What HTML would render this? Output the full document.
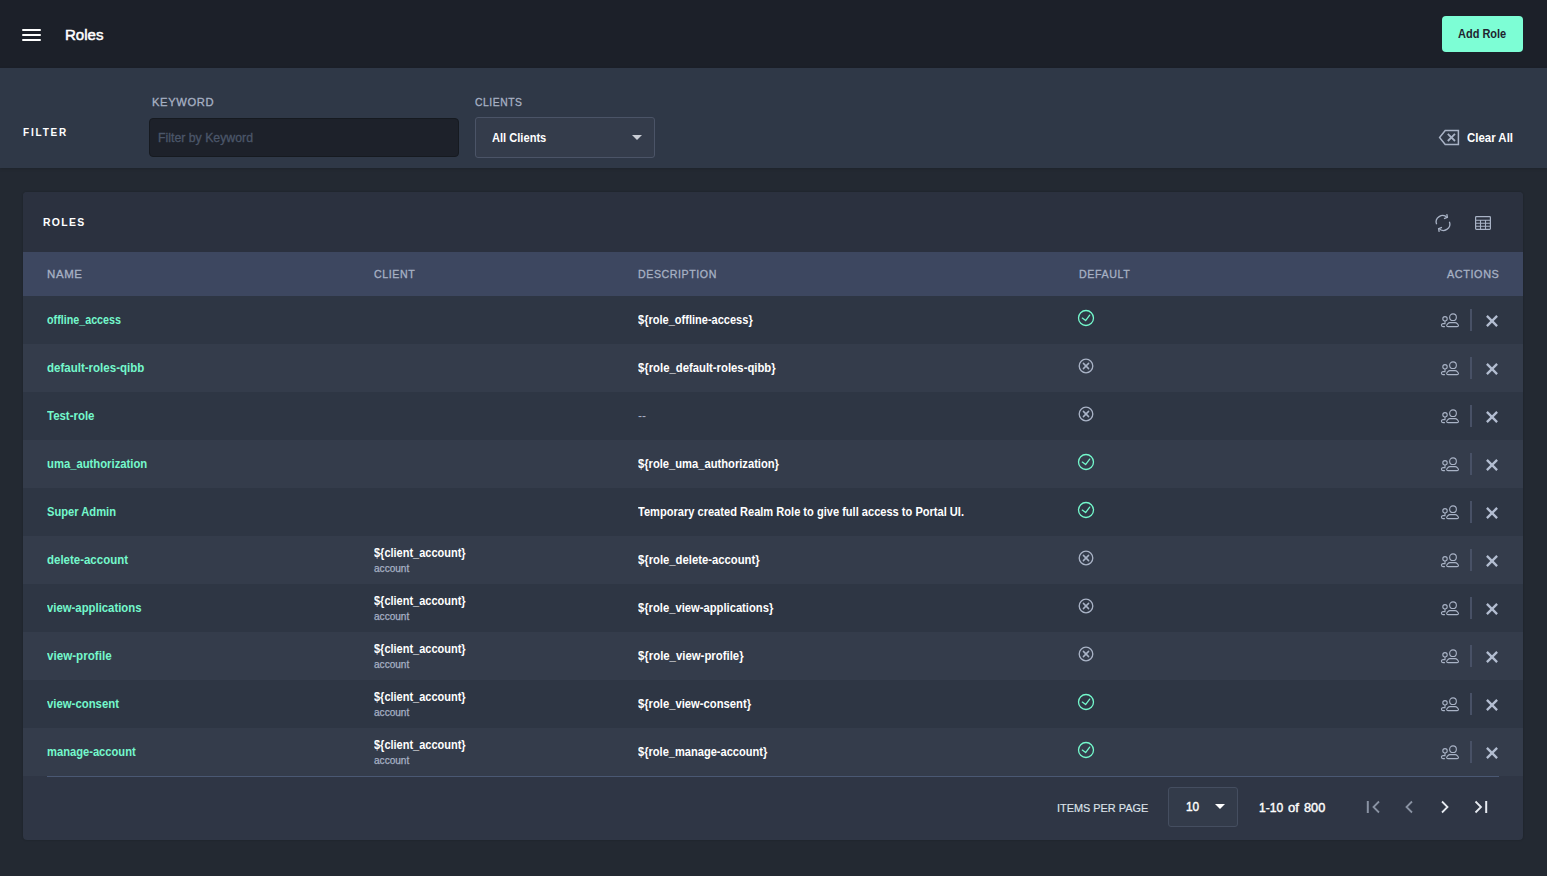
<!DOCTYPE html>
<html><head><meta charset="utf-8"><title>Roles</title>
<style>
html,body{margin:0;padding:0;}
body{width:1547px;height:876px;overflow:hidden;background:#232932;position:relative;font-family:"Liberation Sans",sans-serif;}
.t{position:absolute;white-space:nowrap;line-height:1;}
.b{position:absolute;}
svg{position:absolute;overflow:visible;}
</style></head><body>
<div class="b" style="left:0;top:0;width:1547px;height:68px;background:#1c2029"></div>
<div class="b" style="left:22px;top:29px;width:19px;height:2px;background:#fff;border-radius:1px"></div>
<div class="b" style="left:22px;top:34px;width:19px;height:2px;background:#fff;border-radius:1px"></div>
<div class="b" style="left:22px;top:39px;width:19px;height:2px;background:#fff;border-radius:1px"></div>
<div class="t" style="top:27.30px;font-size:15px;color:#ffffff;-webkit-text-stroke:0.5px #ffffff;left:64.60px;transform:scaleX(1.0039);transform-origin:0 0;">Roles</div>
<div class="b" style="left:1442px;top:16px;width:81px;height:36px;background:#7dfed5;border-radius:4px"></div>
<div class="t" style="top:27.84px;font-size:12px;color:#1f2430;font-weight:700;left:1458.40px;transform:scaleX(0.9155);transform-origin:0 0;">Add Role</div>
<div class="b" style="left:0;top:68px;width:1547px;height:100px;background:#2f3847;box-shadow:0 1px 3px rgba(0,0,0,0.15)"></div>
<div class="t" style="top:126.69px;font-size:11px;color:#ffffff;font-weight:700;letter-spacing:2px;left:23.40px;transform:scaleX(0.9078);transform-origin:0 0;">FILTER</div>
<div class="t" style="top:96.69px;font-size:11px;color:#a7b1c4;letter-spacing:0.6px;-webkit-text-stroke:0.3px #a7b1c4;left:151.60px;transform:scaleX(1.0174);transform-origin:0 0;">KEYWORD</div>
<div class="b" style="left:149px;top:118px;width:308px;height:37px;background:#1d212a;border:1px solid #161a20;border-radius:4px"></div>
<div class="t" style="top:131.84px;font-size:12px;color:#4b5669;-webkit-text-stroke:0.3px #4b5669;left:158.00px;transform:scaleX(1.0248);transform-origin:0 0;">Filter by Keyword</div>
<div class="t" style="top:97.19px;font-size:11px;color:#a7b1c4;letter-spacing:0.6px;-webkit-text-stroke:0.3px #a7b1c4;left:475.20px;transform:scaleX(0.9391);transform-origin:0 0;">CLIENTS</div>
<div class="b" style="left:475px;top:117px;width:178px;height:39px;background:#343c4b;border:1px solid #4b5467;border-radius:3px"></div>
<div class="t" style="top:131.84px;font-size:12px;color:#ffffff;font-weight:700;left:492.20px;transform:scaleX(0.9250);transform-origin:0 0;">All Clients</div>
<svg style="left:632px;top:135px" width="10" height="5"><path d="M0 0H10L5 5Z" fill="#c9cdd5"/></svg>
<svg style="left:1438px;top:129px" width="22" height="17" viewBox="0 0 22 17"><path d="M7.2 1.6H20.4V15.4H7.2L1.6 8.5Z" fill="none" stroke="#a9b3c6" stroke-width="1.5" stroke-linejoin="miter"/><path d="M9.8 4.8L17 12" stroke="#a9b3c6" stroke-width="1.8"/><path d="M17 4.8L9.8 12" stroke="#a9b3c6" stroke-width="1.8"/></svg>
<div class="t" style="top:131.84px;font-size:12px;color:#ffffff;font-weight:700;left:1466.80px;transform:scaleX(0.9534);transform-origin:0 0;">Clear All</div>
<div class="b" style="left:23px;top:192px;width:1500px;height:648px;background:#2f3645;border-radius:4px;overflow:hidden;box-shadow:0 0 2px rgba(0,0,0,0.25)"><div class="b" style="left:0;top:0;width:1500px;height:60px;background:#2b313f"></div></div>
<div class="t" style="top:216.69px;font-size:11px;color:#ffffff;font-weight:700;letter-spacing:1.4px;left:43.00px;transform:scaleX(0.9471);transform-origin:0 0;">ROLES</div>
<svg style="left:1433px;top:212px" width="20" height="22" viewBox="0 0 20 22"><path d="M3.6 12.3A6.4 6.4 0 0 1 14.2 5.6" fill="none" stroke="#a9b3c6" stroke-width="1.3"/><path d="M11.0 6.6L14.4 5.4L13.8 2.2" fill="none" stroke="#a9b3c6" stroke-width="1.3"/><path d="M16.4 9.7A6.4 6.4 0 0 1 5.8 16.4" fill="none" stroke="#a9b3c6" stroke-width="1.3"/><path d="M9.0 15.4L5.6 16.6L6.2 19.8" fill="none" stroke="#a9b3c6" stroke-width="1.3"/></svg>
<svg style="left:1475px;top:216px" width="16" height="14" viewBox="0 0 16 14"><rect x="0.6" y="0.6" width="14.8" height="12.8" rx="0.8" fill="none" stroke="#a9b3c6" stroke-width="1.2"/><path d="M0.6 4.2H15.4M0.6 7.3H15.4M0.6 10.3H15.4M5.5 4.2V13.4M10.5 4.2V13.4" stroke="#a9b3c6" stroke-width="1.1"/></svg>
<div class="b" style="left:23px;top:252px;width:1500px;height:44px;background:#3d4760"></div>
<div class="t" style="top:268.89px;font-size:11px;color:#a7b1c4;letter-spacing:0.6px;-webkit-text-stroke:0.3px #a7b1c4;left:46.90px;transform:scaleX(1.0417);transform-origin:0 0;">NAME</div>
<div class="t" style="top:268.89px;font-size:11px;color:#a7b1c4;letter-spacing:0.6px;-webkit-text-stroke:0.3px #a7b1c4;left:374.20px;transform:scaleX(0.9644);transform-origin:0 0;">CLIENT</div>
<div class="t" style="top:268.89px;font-size:11px;color:#a7b1c4;letter-spacing:0.6px;-webkit-text-stroke:0.3px #a7b1c4;left:638.00px;transform:scaleX(0.9649);transform-origin:0 0;">DESCRIPTION</div>
<div class="t" style="top:268.89px;font-size:11px;color:#a7b1c4;letter-spacing:0.6px;-webkit-text-stroke:0.3px #a7b1c4;left:1078.50px;transform:scaleX(0.9694);transform-origin:0 0;">DEFAULT</div>
<div class="t" style="top:268.89px;font-size:11px;color:#a7b1c4;letter-spacing:0.6px;-webkit-text-stroke:0.3px #a7b1c4;left:1446.80px;transform:scaleX(0.9867);transform-origin:0 0;">ACTIONS</div>
<div class="b" style="left:23px;top:296px;width:1500px;height:48px;background:#2e3644"></div>
<div class="t" style="top:313.84px;font-size:12px;color:#74f8cc;font-weight:700;left:47.00px;transform:scaleX(0.8948);transform-origin:0 0;">offline_access</div>
<div class="t" style="top:313.84px;font-size:12px;color:#ffffff;font-weight:700;left:638.00px;transform:scaleX(0.9194);transform-origin:0 0;">${role_offline-access}</div>
<svg style="left:1077px;top:309px" width="18" height="18" viewBox="0 0 18 18"><circle cx="9" cy="9" r="7.5" fill="none" stroke="#74f8cc" stroke-width="1.3"/><path d="M5.3 9.1L8.6 11.6L12.7 6.1" fill="none" stroke="#74f8cc" stroke-width="1.3" stroke-linecap="round" stroke-linejoin="round"/></svg>
<svg style="left:1440px;top:313px" width="20" height="15" viewBox="0 0 20 15"><circle cx="13" cy="4.2" r="3.35" fill="none" stroke="#a9b3c6" stroke-width="1.1"/><path d="M8.2 13.65H16.9C18.3 13.65 18.9 12.6 18.1 11.7L17.2 10.6C16.7 10 16.1 9.65 15.2 9.65H9.9C9.0 9.65 8.4 10 7.9 10.6L7.0 11.7C6.2 12.6 6.8 13.65 8.2 13.65Z" fill="none" stroke="#a9b3c6" stroke-width="1.1"/><circle cx="5" cy="5.8" r="2.2" fill="none" stroke="#a9b3c6" stroke-width="1.1"/><path d="M5 8V10.6H3.2C1.9 10.6 1.4 11.3 1.4 12.1C1.4 12.9 1.9 13.6 2.9 13.6H4.9" fill="none" stroke="#a9b3c6" stroke-width="1.1"/></svg>
<div class="b" style="left:1470px;top:309px;width:2px;height:22px;background:#485166"></div>
<svg style="left:1485px;top:314px" width="14" height="14" viewBox="0 0 14 14"><path d="M1.9 1.9L12.1 12.1" stroke="#b3bdd1" stroke-width="2.3"/><path d="M12.1 1.9L1.9 12.1" stroke="#b3bdd1" stroke-width="2.3"/></svg>
<div class="b" style="left:23px;top:344px;width:1500px;height:48px;background:#343c4b"></div>
<div class="t" style="top:361.84px;font-size:12px;color:#74f8cc;font-weight:700;left:47.00px;transform:scaleX(0.9600);transform-origin:0 0;">default-roles-qibb</div>
<div class="t" style="top:361.84px;font-size:12px;color:#ffffff;font-weight:700;left:638.00px;transform:scaleX(0.9428);transform-origin:0 0;">${role_default-roles-qibb}</div>
<svg style="left:1077px;top:357px" width="18" height="18" viewBox="0 0 18 18"><circle cx="9" cy="9" r="6.8" fill="none" stroke="#a9b3c6" stroke-width="1.3"/><path d="M6.4 6.4L11.6 11.6" fill="none" stroke="#a9b3c6" stroke-width="1.5" stroke-linecap="round"/><path d="M11.6 6.4L6.4 11.6" fill="none" stroke="#a9b3c6" stroke-width="1.5" stroke-linecap="round"/></svg>
<svg style="left:1440px;top:361px" width="20" height="15" viewBox="0 0 20 15"><circle cx="13" cy="4.2" r="3.35" fill="none" stroke="#a9b3c6" stroke-width="1.1"/><path d="M8.2 13.65H16.9C18.3 13.65 18.9 12.6 18.1 11.7L17.2 10.6C16.7 10 16.1 9.65 15.2 9.65H9.9C9.0 9.65 8.4 10 7.9 10.6L7.0 11.7C6.2 12.6 6.8 13.65 8.2 13.65Z" fill="none" stroke="#a9b3c6" stroke-width="1.1"/><circle cx="5" cy="5.8" r="2.2" fill="none" stroke="#a9b3c6" stroke-width="1.1"/><path d="M5 8V10.6H3.2C1.9 10.6 1.4 11.3 1.4 12.1C1.4 12.9 1.9 13.6 2.9 13.6H4.9" fill="none" stroke="#a9b3c6" stroke-width="1.1"/></svg>
<div class="b" style="left:1470px;top:357px;width:2px;height:22px;background:#485166"></div>
<svg style="left:1485px;top:362px" width="14" height="14" viewBox="0 0 14 14"><path d="M1.9 1.9L12.1 12.1" stroke="#b3bdd1" stroke-width="2.3"/><path d="M12.1 1.9L1.9 12.1" stroke="#b3bdd1" stroke-width="2.3"/></svg>
<div class="b" style="left:23px;top:392px;width:1500px;height:48px;background:#2e3644"></div>
<div class="t" style="top:409.84px;font-size:12px;color:#74f8cc;font-weight:700;left:47.00px;transform:scaleX(0.9538);transform-origin:0 0;">Test-role</div>
<div class="t" style="top:409.84px;font-size:12px;color:#a7b1c4;left:638.00px;">--</div>
<svg style="left:1077px;top:405px" width="18" height="18" viewBox="0 0 18 18"><circle cx="9" cy="9" r="6.8" fill="none" stroke="#a9b3c6" stroke-width="1.3"/><path d="M6.4 6.4L11.6 11.6" fill="none" stroke="#a9b3c6" stroke-width="1.5" stroke-linecap="round"/><path d="M11.6 6.4L6.4 11.6" fill="none" stroke="#a9b3c6" stroke-width="1.5" stroke-linecap="round"/></svg>
<svg style="left:1440px;top:409px" width="20" height="15" viewBox="0 0 20 15"><circle cx="13" cy="4.2" r="3.35" fill="none" stroke="#a9b3c6" stroke-width="1.1"/><path d="M8.2 13.65H16.9C18.3 13.65 18.9 12.6 18.1 11.7L17.2 10.6C16.7 10 16.1 9.65 15.2 9.65H9.9C9.0 9.65 8.4 10 7.9 10.6L7.0 11.7C6.2 12.6 6.8 13.65 8.2 13.65Z" fill="none" stroke="#a9b3c6" stroke-width="1.1"/><circle cx="5" cy="5.8" r="2.2" fill="none" stroke="#a9b3c6" stroke-width="1.1"/><path d="M5 8V10.6H3.2C1.9 10.6 1.4 11.3 1.4 12.1C1.4 12.9 1.9 13.6 2.9 13.6H4.9" fill="none" stroke="#a9b3c6" stroke-width="1.1"/></svg>
<div class="b" style="left:1470px;top:405px;width:2px;height:22px;background:#485166"></div>
<svg style="left:1485px;top:410px" width="14" height="14" viewBox="0 0 14 14"><path d="M1.9 1.9L12.1 12.1" stroke="#b3bdd1" stroke-width="2.3"/><path d="M12.1 1.9L1.9 12.1" stroke="#b3bdd1" stroke-width="2.3"/></svg>
<div class="b" style="left:23px;top:440px;width:1500px;height:48px;background:#343c4b"></div>
<div class="t" style="top:457.84px;font-size:12px;color:#74f8cc;font-weight:700;left:47.00px;transform:scaleX(0.9391);transform-origin:0 0;">uma_authorization</div>
<div class="t" style="top:457.84px;font-size:12px;color:#ffffff;font-weight:700;left:638.00px;transform:scaleX(0.9313);transform-origin:0 0;">${role_uma_authorization}</div>
<svg style="left:1077px;top:453px" width="18" height="18" viewBox="0 0 18 18"><circle cx="9" cy="9" r="7.5" fill="none" stroke="#74f8cc" stroke-width="1.3"/><path d="M5.3 9.1L8.6 11.6L12.7 6.1" fill="none" stroke="#74f8cc" stroke-width="1.3" stroke-linecap="round" stroke-linejoin="round"/></svg>
<svg style="left:1440px;top:457px" width="20" height="15" viewBox="0 0 20 15"><circle cx="13" cy="4.2" r="3.35" fill="none" stroke="#a9b3c6" stroke-width="1.1"/><path d="M8.2 13.65H16.9C18.3 13.65 18.9 12.6 18.1 11.7L17.2 10.6C16.7 10 16.1 9.65 15.2 9.65H9.9C9.0 9.65 8.4 10 7.9 10.6L7.0 11.7C6.2 12.6 6.8 13.65 8.2 13.65Z" fill="none" stroke="#a9b3c6" stroke-width="1.1"/><circle cx="5" cy="5.8" r="2.2" fill="none" stroke="#a9b3c6" stroke-width="1.1"/><path d="M5 8V10.6H3.2C1.9 10.6 1.4 11.3 1.4 12.1C1.4 12.9 1.9 13.6 2.9 13.6H4.9" fill="none" stroke="#a9b3c6" stroke-width="1.1"/></svg>
<div class="b" style="left:1470px;top:453px;width:2px;height:22px;background:#485166"></div>
<svg style="left:1485px;top:458px" width="14" height="14" viewBox="0 0 14 14"><path d="M1.9 1.9L12.1 12.1" stroke="#b3bdd1" stroke-width="2.3"/><path d="M12.1 1.9L1.9 12.1" stroke="#b3bdd1" stroke-width="2.3"/></svg>
<div class="b" style="left:23px;top:488px;width:1500px;height:48px;background:#2e3644"></div>
<div class="t" style="top:505.84px;font-size:12px;color:#74f8cc;font-weight:700;left:47.00px;transform:scaleX(0.9293);transform-origin:0 0;">Super Admin</div>
<div class="t" style="top:505.84px;font-size:12px;color:#ffffff;font-weight:700;left:638.00px;transform:scaleX(0.9229);transform-origin:0 0;">Temporary created Realm Role to give full access to Portal UI.</div>
<svg style="left:1077px;top:501px" width="18" height="18" viewBox="0 0 18 18"><circle cx="9" cy="9" r="7.5" fill="none" stroke="#74f8cc" stroke-width="1.3"/><path d="M5.3 9.1L8.6 11.6L12.7 6.1" fill="none" stroke="#74f8cc" stroke-width="1.3" stroke-linecap="round" stroke-linejoin="round"/></svg>
<svg style="left:1440px;top:505px" width="20" height="15" viewBox="0 0 20 15"><circle cx="13" cy="4.2" r="3.35" fill="none" stroke="#a9b3c6" stroke-width="1.1"/><path d="M8.2 13.65H16.9C18.3 13.65 18.9 12.6 18.1 11.7L17.2 10.6C16.7 10 16.1 9.65 15.2 9.65H9.9C9.0 9.65 8.4 10 7.9 10.6L7.0 11.7C6.2 12.6 6.8 13.65 8.2 13.65Z" fill="none" stroke="#a9b3c6" stroke-width="1.1"/><circle cx="5" cy="5.8" r="2.2" fill="none" stroke="#a9b3c6" stroke-width="1.1"/><path d="M5 8V10.6H3.2C1.9 10.6 1.4 11.3 1.4 12.1C1.4 12.9 1.9 13.6 2.9 13.6H4.9" fill="none" stroke="#a9b3c6" stroke-width="1.1"/></svg>
<div class="b" style="left:1470px;top:501px;width:2px;height:22px;background:#485166"></div>
<svg style="left:1485px;top:506px" width="14" height="14" viewBox="0 0 14 14"><path d="M1.9 1.9L12.1 12.1" stroke="#b3bdd1" stroke-width="2.3"/><path d="M12.1 1.9L1.9 12.1" stroke="#b3bdd1" stroke-width="2.3"/></svg>
<div class="b" style="left:23px;top:536px;width:1500px;height:48px;background:#343c4b"></div>
<div class="t" style="top:553.84px;font-size:12px;color:#74f8cc;font-weight:700;left:47.00px;transform:scaleX(0.9563);transform-origin:0 0;">delete-account</div>
<div class="t" style="top:546.54px;font-size:12px;color:#ffffff;font-weight:700;left:374.30px;transform:scaleX(0.9155);transform-origin:0 0;">${client_account}</div>
<div class="t" style="top:564.33px;font-size:10px;color:#a7b1c4;-webkit-text-stroke:0.25px #a7b1c4;left:374.30px;transform:scaleX(1.0071);transform-origin:0 0;">account</div>
<div class="t" style="top:553.84px;font-size:12px;color:#ffffff;font-weight:700;left:638.00px;transform:scaleX(0.9397);transform-origin:0 0;">${role_delete-account}</div>
<svg style="left:1077px;top:549px" width="18" height="18" viewBox="0 0 18 18"><circle cx="9" cy="9" r="6.8" fill="none" stroke="#a9b3c6" stroke-width="1.3"/><path d="M6.4 6.4L11.6 11.6" fill="none" stroke="#a9b3c6" stroke-width="1.5" stroke-linecap="round"/><path d="M11.6 6.4L6.4 11.6" fill="none" stroke="#a9b3c6" stroke-width="1.5" stroke-linecap="round"/></svg>
<svg style="left:1440px;top:553px" width="20" height="15" viewBox="0 0 20 15"><circle cx="13" cy="4.2" r="3.35" fill="none" stroke="#a9b3c6" stroke-width="1.1"/><path d="M8.2 13.65H16.9C18.3 13.65 18.9 12.6 18.1 11.7L17.2 10.6C16.7 10 16.1 9.65 15.2 9.65H9.9C9.0 9.65 8.4 10 7.9 10.6L7.0 11.7C6.2 12.6 6.8 13.65 8.2 13.65Z" fill="none" stroke="#a9b3c6" stroke-width="1.1"/><circle cx="5" cy="5.8" r="2.2" fill="none" stroke="#a9b3c6" stroke-width="1.1"/><path d="M5 8V10.6H3.2C1.9 10.6 1.4 11.3 1.4 12.1C1.4 12.9 1.9 13.6 2.9 13.6H4.9" fill="none" stroke="#a9b3c6" stroke-width="1.1"/></svg>
<div class="b" style="left:1470px;top:549px;width:2px;height:22px;background:#485166"></div>
<svg style="left:1485px;top:554px" width="14" height="14" viewBox="0 0 14 14"><path d="M1.9 1.9L12.1 12.1" stroke="#b3bdd1" stroke-width="2.3"/><path d="M12.1 1.9L1.9 12.1" stroke="#b3bdd1" stroke-width="2.3"/></svg>
<div class="b" style="left:23px;top:584px;width:1500px;height:48px;background:#2e3644"></div>
<div class="t" style="top:601.84px;font-size:12px;color:#74f8cc;font-weight:700;left:47.00px;transform:scaleX(0.9445);transform-origin:0 0;">view-applications</div>
<div class="t" style="top:594.54px;font-size:12px;color:#ffffff;font-weight:700;left:374.30px;transform:scaleX(0.9155);transform-origin:0 0;">${client_account}</div>
<div class="t" style="top:612.33px;font-size:10px;color:#a7b1c4;-webkit-text-stroke:0.25px #a7b1c4;left:374.30px;transform:scaleX(1.0071);transform-origin:0 0;">account</div>
<div class="t" style="top:601.84px;font-size:12px;color:#ffffff;font-weight:700;left:638.00px;transform:scaleX(0.9347);transform-origin:0 0;">${role_view-applications}</div>
<svg style="left:1077px;top:597px" width="18" height="18" viewBox="0 0 18 18"><circle cx="9" cy="9" r="6.8" fill="none" stroke="#a9b3c6" stroke-width="1.3"/><path d="M6.4 6.4L11.6 11.6" fill="none" stroke="#a9b3c6" stroke-width="1.5" stroke-linecap="round"/><path d="M11.6 6.4L6.4 11.6" fill="none" stroke="#a9b3c6" stroke-width="1.5" stroke-linecap="round"/></svg>
<svg style="left:1440px;top:601px" width="20" height="15" viewBox="0 0 20 15"><circle cx="13" cy="4.2" r="3.35" fill="none" stroke="#a9b3c6" stroke-width="1.1"/><path d="M8.2 13.65H16.9C18.3 13.65 18.9 12.6 18.1 11.7L17.2 10.6C16.7 10 16.1 9.65 15.2 9.65H9.9C9.0 9.65 8.4 10 7.9 10.6L7.0 11.7C6.2 12.6 6.8 13.65 8.2 13.65Z" fill="none" stroke="#a9b3c6" stroke-width="1.1"/><circle cx="5" cy="5.8" r="2.2" fill="none" stroke="#a9b3c6" stroke-width="1.1"/><path d="M5 8V10.6H3.2C1.9 10.6 1.4 11.3 1.4 12.1C1.4 12.9 1.9 13.6 2.9 13.6H4.9" fill="none" stroke="#a9b3c6" stroke-width="1.1"/></svg>
<div class="b" style="left:1470px;top:597px;width:2px;height:22px;background:#485166"></div>
<svg style="left:1485px;top:602px" width="14" height="14" viewBox="0 0 14 14"><path d="M1.9 1.9L12.1 12.1" stroke="#b3bdd1" stroke-width="2.3"/><path d="M12.1 1.9L1.9 12.1" stroke="#b3bdd1" stroke-width="2.3"/></svg>
<div class="b" style="left:23px;top:632px;width:1500px;height:48px;background:#343c4b"></div>
<div class="t" style="top:649.84px;font-size:12px;color:#74f8cc;font-weight:700;left:47.00px;transform:scaleX(0.9700);transform-origin:0 0;">view-profile</div>
<div class="t" style="top:642.54px;font-size:12px;color:#ffffff;font-weight:700;left:374.30px;transform:scaleX(0.9155);transform-origin:0 0;">${client_account}</div>
<div class="t" style="top:660.33px;font-size:10px;color:#a7b1c4;-webkit-text-stroke:0.25px #a7b1c4;left:374.30px;transform:scaleX(1.0071);transform-origin:0 0;">account</div>
<div class="t" style="top:649.84px;font-size:12px;color:#ffffff;font-weight:700;left:638.00px;transform:scaleX(0.9479);transform-origin:0 0;">${role_view-profile}</div>
<svg style="left:1077px;top:645px" width="18" height="18" viewBox="0 0 18 18"><circle cx="9" cy="9" r="6.8" fill="none" stroke="#a9b3c6" stroke-width="1.3"/><path d="M6.4 6.4L11.6 11.6" fill="none" stroke="#a9b3c6" stroke-width="1.5" stroke-linecap="round"/><path d="M11.6 6.4L6.4 11.6" fill="none" stroke="#a9b3c6" stroke-width="1.5" stroke-linecap="round"/></svg>
<svg style="left:1440px;top:649px" width="20" height="15" viewBox="0 0 20 15"><circle cx="13" cy="4.2" r="3.35" fill="none" stroke="#a9b3c6" stroke-width="1.1"/><path d="M8.2 13.65H16.9C18.3 13.65 18.9 12.6 18.1 11.7L17.2 10.6C16.7 10 16.1 9.65 15.2 9.65H9.9C9.0 9.65 8.4 10 7.9 10.6L7.0 11.7C6.2 12.6 6.8 13.65 8.2 13.65Z" fill="none" stroke="#a9b3c6" stroke-width="1.1"/><circle cx="5" cy="5.8" r="2.2" fill="none" stroke="#a9b3c6" stroke-width="1.1"/><path d="M5 8V10.6H3.2C1.9 10.6 1.4 11.3 1.4 12.1C1.4 12.9 1.9 13.6 2.9 13.6H4.9" fill="none" stroke="#a9b3c6" stroke-width="1.1"/></svg>
<div class="b" style="left:1470px;top:645px;width:2px;height:22px;background:#485166"></div>
<svg style="left:1485px;top:650px" width="14" height="14" viewBox="0 0 14 14"><path d="M1.9 1.9L12.1 12.1" stroke="#b3bdd1" stroke-width="2.3"/><path d="M12.1 1.9L1.9 12.1" stroke="#b3bdd1" stroke-width="2.3"/></svg>
<div class="b" style="left:23px;top:680px;width:1500px;height:48px;background:#2e3644"></div>
<div class="t" style="top:697.84px;font-size:12px;color:#74f8cc;font-weight:700;left:47.00px;transform:scaleX(0.9461);transform-origin:0 0;">view-consent</div>
<div class="t" style="top:690.54px;font-size:12px;color:#ffffff;font-weight:700;left:374.30px;transform:scaleX(0.9155);transform-origin:0 0;">${client_account}</div>
<div class="t" style="top:708.33px;font-size:10px;color:#a7b1c4;-webkit-text-stroke:0.25px #a7b1c4;left:374.30px;transform:scaleX(1.0071);transform-origin:0 0;">account</div>
<div class="t" style="top:697.84px;font-size:12px;color:#ffffff;font-weight:700;left:638.00px;transform:scaleX(0.9362);transform-origin:0 0;">${role_view-consent}</div>
<svg style="left:1077px;top:693px" width="18" height="18" viewBox="0 0 18 18"><circle cx="9" cy="9" r="7.5" fill="none" stroke="#74f8cc" stroke-width="1.3"/><path d="M5.3 9.1L8.6 11.6L12.7 6.1" fill="none" stroke="#74f8cc" stroke-width="1.3" stroke-linecap="round" stroke-linejoin="round"/></svg>
<svg style="left:1440px;top:697px" width="20" height="15" viewBox="0 0 20 15"><circle cx="13" cy="4.2" r="3.35" fill="none" stroke="#a9b3c6" stroke-width="1.1"/><path d="M8.2 13.65H16.9C18.3 13.65 18.9 12.6 18.1 11.7L17.2 10.6C16.7 10 16.1 9.65 15.2 9.65H9.9C9.0 9.65 8.4 10 7.9 10.6L7.0 11.7C6.2 12.6 6.8 13.65 8.2 13.65Z" fill="none" stroke="#a9b3c6" stroke-width="1.1"/><circle cx="5" cy="5.8" r="2.2" fill="none" stroke="#a9b3c6" stroke-width="1.1"/><path d="M5 8V10.6H3.2C1.9 10.6 1.4 11.3 1.4 12.1C1.4 12.9 1.9 13.6 2.9 13.6H4.9" fill="none" stroke="#a9b3c6" stroke-width="1.1"/></svg>
<div class="b" style="left:1470px;top:693px;width:2px;height:22px;background:#485166"></div>
<svg style="left:1485px;top:698px" width="14" height="14" viewBox="0 0 14 14"><path d="M1.9 1.9L12.1 12.1" stroke="#b3bdd1" stroke-width="2.3"/><path d="M12.1 1.9L1.9 12.1" stroke="#b3bdd1" stroke-width="2.3"/></svg>
<div class="b" style="left:23px;top:728px;width:1500px;height:48px;background:#343c4b"></div>
<div class="t" style="top:745.84px;font-size:12px;color:#74f8cc;font-weight:700;left:47.00px;transform:scaleX(0.9303);transform-origin:0 0;">manage-account</div>
<div class="t" style="top:738.54px;font-size:12px;color:#ffffff;font-weight:700;left:374.30px;transform:scaleX(0.9155);transform-origin:0 0;">${client_account}</div>
<div class="t" style="top:756.33px;font-size:10px;color:#a7b1c4;-webkit-text-stroke:0.25px #a7b1c4;left:374.30px;transform:scaleX(1.0071);transform-origin:0 0;">account</div>
<div class="t" style="top:745.84px;font-size:12px;color:#ffffff;font-weight:700;left:638.00px;transform:scaleX(0.9232);transform-origin:0 0;">${role_manage-account}</div>
<svg style="left:1077px;top:741px" width="18" height="18" viewBox="0 0 18 18"><circle cx="9" cy="9" r="7.5" fill="none" stroke="#74f8cc" stroke-width="1.3"/><path d="M5.3 9.1L8.6 11.6L12.7 6.1" fill="none" stroke="#74f8cc" stroke-width="1.3" stroke-linecap="round" stroke-linejoin="round"/></svg>
<svg style="left:1440px;top:745px" width="20" height="15" viewBox="0 0 20 15"><circle cx="13" cy="4.2" r="3.35" fill="none" stroke="#a9b3c6" stroke-width="1.1"/><path d="M8.2 13.65H16.9C18.3 13.65 18.9 12.6 18.1 11.7L17.2 10.6C16.7 10 16.1 9.65 15.2 9.65H9.9C9.0 9.65 8.4 10 7.9 10.6L7.0 11.7C6.2 12.6 6.8 13.65 8.2 13.65Z" fill="none" stroke="#a9b3c6" stroke-width="1.1"/><circle cx="5" cy="5.8" r="2.2" fill="none" stroke="#a9b3c6" stroke-width="1.1"/><path d="M5 8V10.6H3.2C1.9 10.6 1.4 11.3 1.4 12.1C1.4 12.9 1.9 13.6 2.9 13.6H4.9" fill="none" stroke="#a9b3c6" stroke-width="1.1"/></svg>
<div class="b" style="left:1470px;top:741px;width:2px;height:22px;background:#485166"></div>
<svg style="left:1485px;top:746px" width="14" height="14" viewBox="0 0 14 14"><path d="M1.9 1.9L12.1 12.1" stroke="#b3bdd1" stroke-width="2.3"/><path d="M12.1 1.9L1.9 12.1" stroke="#b3bdd1" stroke-width="2.3"/></svg>
<div class="b" style="left:47px;top:776px;width:1452px;height:1px;background:#4a5873"></div>
<div class="t" style="top:802.69px;font-size:11px;color:#dde2ea;-webkit-text-stroke:0.15px #dde2ea;left:1056.60px;transform:scaleX(0.9902);transform-origin:0 0;">ITEMS PER PAGE</div>
<div class="b" style="left:1168px;top:787px;width:68px;height:38px;border:1px solid #454e60;border-radius:3px;background:#333b4a"></div>
<div class="t" style="top:801.14px;font-size:12px;color:#ffffff;-webkit-text-stroke:0.4px #ffffff;left:1185.80px;transform:scaleX(0.9888);transform-origin:0 0;">10</div>
<svg style="left:1215px;top:804px" width="10" height="5"><path d="M0 0H10L5 5Z" fill="#ffffff"/></svg>
<div class="t" style="top:801.84px;font-size:12px;color:#ffffff;-webkit-text-stroke:0.4px #ffffff;left:1258.60px;transform:scaleX(1.0083);transform-origin:0 0;">1-10</div>
<div class="t" style="top:801.84px;font-size:12px;color:#ffffff;-webkit-text-stroke:0.4px #ffffff;left:1288.00px;transform:scaleX(1.0945);transform-origin:0 0;">of</div>
<div class="t" style="top:801.84px;font-size:12px;color:#ffffff;-webkit-text-stroke:0.4px #ffffff;left:1303.80px;transform:scaleX(1.0600);transform-origin:0 0;">800</div>
<svg style="left:1365px;top:800px" width="130" height="14" viewBox="0 0 130 14"><path d="M2.8 1V13" stroke="#8a93a3" stroke-width="2"/><path d="M14 1.5L8.5 7L14 12.5" fill="none" stroke="#8a93a3" stroke-width="1.8"/><path d="M47 1.5L41.5 7L47 12.5" fill="none" stroke="#8a93a3" stroke-width="1.8"/><path d="M77 1.5L82.5 7L77 12.5" fill="none" stroke="#e6eaf0" stroke-width="1.8"/><path d="M110.5 1.5L116 7L110.5 12.5" fill="none" stroke="#e6eaf0" stroke-width="1.8"/><path d="M121.2 1V13" stroke="#e6eaf0" stroke-width="2"/></svg>
</body></html>
